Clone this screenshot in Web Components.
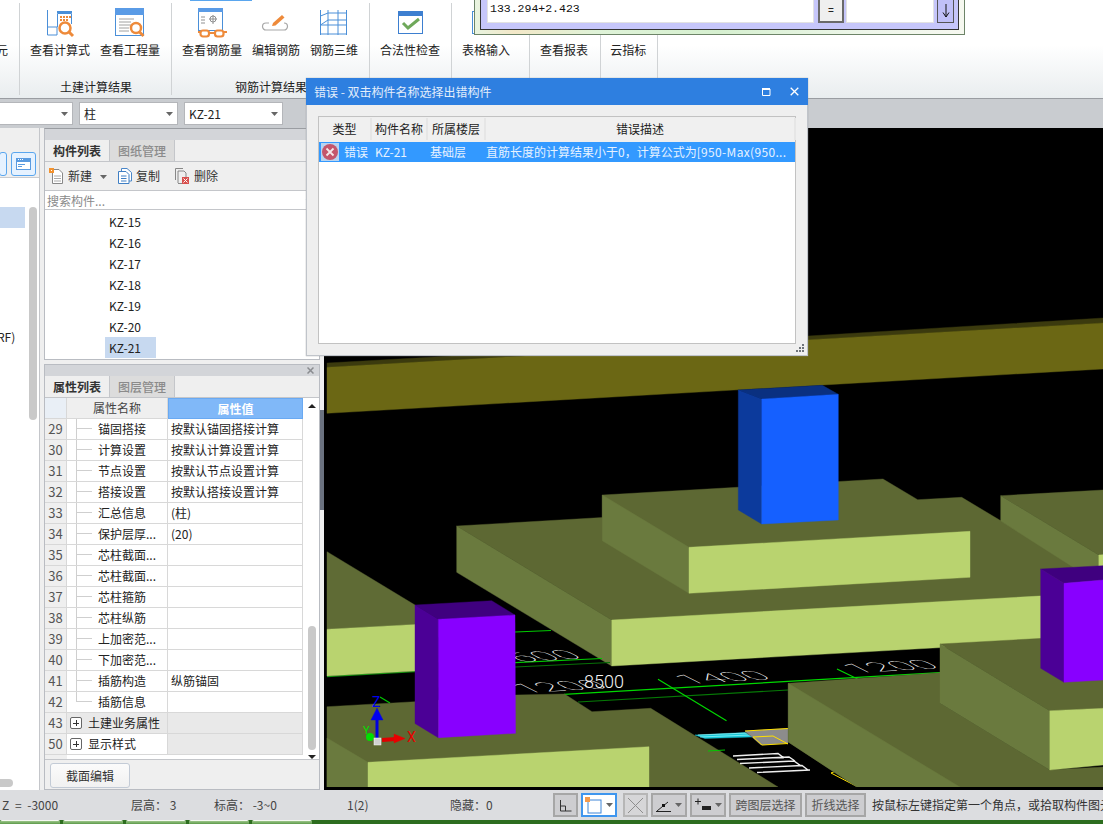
<!DOCTYPE html>
<html lang="zh"><head><meta charset="utf-8"><title>错误</title>
<style>
html,body{margin:0;padding:0;background:#efefef}
body{width:1103px;height:824px;overflow:hidden;font:12px/16px "Noto Sans CJK SC","Noto Sans",sans-serif;color:#222}
</style></head><body>
<x-app></x-app>
<script>
const FONT='"Noto Sans CJK SC","Noto Sans",sans-serif';
function def(name,css,html,init){
  customElements.define(name,class extends HTMLElement{
    constructor(){super();const s=this.attachShadow({mode:'open'});
      s.innerHTML='<style>'+css+'</style>'+(typeof html==='function'?html(this):html);}
    connectedCallback(){
      if(typeof this._h==='undefined'){this._h=1;
        if(typeof html==='function'){this.shadowRoot.innerHTML='<style>'+css+'</style>'+html(this);}
        if(init)init(this);}
    }
  });
}
const ARROW='<svg width="7" height="4" viewBox="0 0 7 4"><path d="M0 0H7L3.5 4Z" fill="#666"/></svg>';
const COMMA='<span style="font-family:\'Noto Sans CJK TC\',sans-serif">，</span>';

/* ---------- ribbon ---------- */
def('x-ribbon',`:host{display:flex;height:98px;border-bottom:1px solid #9a9da2;box-sizing:content-box;position:relative;
  background:linear-gradient(#fff 0,#fff 45px,#e9edef 98px);align-items:flex-start}
  :host::before{content:"";position:absolute;left:190px;top:0;width:62px;height:1px;background:#5aa6ee}`,'<slot></slot>');
def('x-ribbon-group',`:host{display:flex;flex-direction:column;height:92px;margin-top:3px;border-right:1px solid #d0d3d5;box-sizing:content-box;flex:none}
  .items{display:flex;gap:10px;margin-top:5px}
  .t{margin-top:auto;height:16px;text-align:center;line-height:16px;color:#222;white-space:nowrap;position:relative;left:1px}`,
  h=>`<div class="items"><slot></slot></div><div class="t">${h.getAttribute('title')||''}</div>`);
def('x-ribbon-item',`:host{display:flex;flex-direction:column;align-items:center;flex:none}
  .i{width:34px;height:30px;display:block}
  .l{margin-top:4px;white-space:nowrap;line-height:16px;color:#222}`,
  h=>`<div class="i"><slot></slot></div><div class="l">${h.getAttribute('label')}</div>`);

/* ---------- combos row ---------- */
def('x-toolbar',`:host{display:flex;height:29px;background:#c9ccd0;box-sizing:border-box;padding-top:3px;gap:6px;align-items:flex-start}`,'<slot></slot>');
def('x-combo',`:host{display:flex;align-items:center;justify-content:space-between;height:23px;box-sizing:border-box;background:#fff;border:1px solid #b4b6ba;padding:0 4px;flex:none;color:#222}`,
  h=>`<span>${h.getAttribute('text')||''}</span>${ARROW}`);

/* ---------- left tree ---------- */
def('x-tree',`:host{display:flex;flex-direction:column;width:40px;flex:none;border-right:1px solid #c4c6ca;box-sizing:border-box;background:#fff;overflow:hidden}
  .top{height:50px;background:#efefef;border-bottom:1px solid #c9cbcf;display:flex;align-items:flex-end;padding-bottom:1px;gap:4px;box-sizing:border-box}
  .b{height:24px;box-sizing:border-box;border:1px solid #5aa6ee;border-radius:3px;background:#e6f2ff;flex:none;display:flex;align-items:center;justify-content:center}
  .body{position:relative;flex:1;display:flex}
  .list{width:29px;flex:none;padding-top:29px}
  .sel{height:21px;width:25px;background:#c7d9f0}
  .rf{margin-top:99px;line-height:20px;margin-left:-3px;color:#222}
  .sc{width:8px;flex:none;margin:29px 0 0 0;height:213px;background:#c9c9c9;border-radius:4px}
  .h{position:absolute;left:0;bottom:3px;width:13px;height:8px;background:#c9c9c9;border-radius:0 4px 4px 0}`,
  `<div class="top"><div class="b" style="width:8px;margin-left:-1px;margin-bottom:0"></div>
    <div class="b" style="width:25px"><svg width="15" height="12" viewBox="0 0 15 12"><rect width="15" height="12" fill="#5a9be0"/><rect x="1" y="4" width="13" height="7" fill="#fff"/><rect x="2" y="6" width="7" height="1" fill="#5a9be0"/><rect x="2" y="8" width="4" height="1" fill="#5a9be0"/><rect x="2" y="1" width="1" height="1" fill="#fff"/><rect x="4" y="1" width="1" height="1" fill="#fff"/><rect x="6" y="1" width="1" height="1" fill="#fff"/></svg></div></div>
   <div class="body"><div class="list"><div class="sel"></div><div class="rf">RF)</div></div><div class="sc"></div><div class="h"></div></div>`);

/* ---------- panel shell ---------- */
def('x-panel',`:host{display:flex;flex-direction:column;box-sizing:border-box;border:1px solid #b9bcc2;border-top-color:#9a9da2;background:#efefef;overflow:hidden;position:relative}
  .hd{height:11px;background:#d3d5d9;flex:none;display:flex;justify-content:flex-end;align-items:center;padding-right:5px;color:#8a8c90}
  .tabs{height:21px;display:flex;flex:none;border-bottom:1px solid #c4c6ca;background:#efefef}
  .tab{width:64px;text-align:center;line-height:21px;font-weight:700;color:#333;border-right:1px solid #c4c6ca;font-size:12px}
  .tab.off{font-weight:500;color:#8b8b8b;background:#dcdcdc}`,
  h=>`<div class="hd">${h.hasAttribute('closable')?'<svg width="7" height="7" viewBox="0 0 7 7"><path d="M.5.5l6 6M6.5.5l-6 6" stroke="#8a8c90" stroke-width="1.5"/></svg>':''}</div>
   <div class="tabs"><div class="tab">${h.getAttribute('a')}</div><div class="tab off">${h.getAttribute('b')}</div></div><slot></slot>`);

def('x-tool-action',`:host{display:inline-flex;align-items:center;gap:4px;color:#333}`,
  h=>`<slot></slot><span>${h.getAttribute('label')}</span>`);

def('x-comp-list',`:host{display:flex;flex-direction:column;flex:1;min-height:0}
  .tb{height:29px;border-bottom:1px solid #c4c6ca;box-sizing:border-box;display:flex;align-items:center;padding-left:4px;flex:none}
  .s{height:19px;box-sizing:border-box;background:#fff;border-bottom:1px solid #c4c6ca;color:#8a8a8a;padding:0 4px 0 2px;line-height:17px;flex:none;white-space:nowrap;display:flex;align-items:center;justify-content:space-between}
  .l{flex:1;background:#fff;padding-top:1px}
  .r{height:21px;line-height:21px;margin-left:60px;padding-left:4px;width:47px;color:#222}
  .r.on{background:#c7d9f0}`,
  ()=>`<div class="tb">
    <x-tool-action label="新建" style="width:48px"><svg width="15" height="16" viewBox="0 0 15 16"><path d="M3.5 1.5H10l3.5 3.5v10.5h-10z" fill="#fff" stroke="#888"/><path d="M5 8h7M5 10.500h7M5 13h7" stroke="#aaa"/><rect x="0" y="0" width="5" height="5" fill="#f3932f"/><rect x="2" y="2" width="1" height="1" fill="#fff"/></svg></x-tool-action>
    <span style="margin:1px 0 0 3px;width:18px;display:inline-flex">${ARROW}</span>
    <x-tool-action label="复制"><svg width="14" height="16" viewBox="0 0 14 16"><path d="M3.500 3V.5H9l4.500 4V13H11" fill="#fff" stroke="#4a86c8"/><path d="M.5 3.500H8l3 3v9H.5z" fill="#fff" stroke="#3f7fc4"/><path d="M3 8h5.500M3 10.500h5.500M3 13h5.500" stroke="#3f7fc4"/></svg></x-tool-action>
    <x-tool-action label="删除" style="margin-left:15px;gap:5px"><svg width="14" height="16" viewBox="0 0 14 16"><path d="M.5 12V.5H8M3 15V3h6l2 2v4" fill="none" stroke="#888"/><path d="M3 15.500h5" stroke="#888"/><rect x="7" y="9" width="7" height="7" fill="#d8504e"/><path d="M8.500 10.500l4 4M12.500 10.500l-4 4" stroke="#fff"/></svg></x-tool-action>
   </div>
   <div class="s"><span>搜索构件...</span><svg width="10" height="10" viewBox="0 0 10 10"><circle cx="5" cy="4.500" r="3.500" fill="none" stroke="#3f8fd8" stroke-width="1.200"/><path d="M7.500 7l2 2" stroke="#3f8fd8"/></svg></div>
   <div class="l">${['KZ-15','KZ-16','KZ-17','KZ-18','KZ-19','KZ-20','KZ-21'].map((k,i)=>`<div class="r${i==6?' on':''}">${k}</div>`).join('')}</div>`);

const PROPS=[[29,'锚固搭接','按默认锚固搭接计算'],[30,'计算设置','按默认计算设置计算'],[31,'节点设置','按默认节点设置计算'],[32,'搭接设置','按默认搭接设置计算'],[33,'汇总信息','(柱)'],[34,'保护层厚...','(20)'],[35,'芯柱截面...',''],[36,'芯柱截面...',''],[37,'芯柱箍筋',''],[38,'芯柱纵筋',''],[39,'上加密范...',''],[40,'下加密范...',''],[41,'插筋构造','纵筋锚固'],[42,'插筋信息','']];
def('x-prop-table',`:host{display:flex;flex-direction:column;flex:1;min-height:0;position:relative}
  .wrap{display:flex;flex:none;background:#fff;height:362px;border-bottom:1px solid #c4c6ca;box-sizing:border-box}
  .grid{width:258px;flex:none;display:grid;grid-template-columns:22px 101px 135px;grid-auto-rows:21px}
  .c{box-sizing:border-box;border-right:1px solid #d8d8d8;border-bottom:1px solid #d8d8d8;line-height:20px;white-space:nowrap;overflow:hidden;color:#222}
  .hd{background:#efefef;text-align:center;color:#444}
  .hv{background:#80b8f8;border:1px solid #69a9f2;text-align:center;color:#fff;font-weight:700}
  .hi{background:#e9eff6}
  .i{background:#efefef;text-align:center;color:#555;font-size:13px}
  .n{padding-left:31px;position:relative}
  .n::before{content:"";position:absolute;left:9px;top:0;bottom:0;width:1px;background:#cfcfcf}
  .n::after{content:"";position:absolute;left:9px;top:9px;width:16px;height:1px;background:#cfcfcf}
  .n.last::before{bottom:10px}
  .v{padding-left:3px}
  .g{background:#e9e9e9}
  .p{display:flex;align-items:center;padding-left:3px;gap:6px}
  .box{width:12px;height:12px;box-sizing:border-box;border:1px solid #666;border-radius:2px;position:relative;flex:none;background:#fff}
  .box::before{content:"";position:absolute;left:2px;right:2px;top:4px;height:1px;background:#333;top:4.500px}
  .box::after{content:"";position:absolute;top:2px;bottom:2px;left:4.500px;width:1px;background:#333}
  .sb{flex:1;position:relative;background:#fff}
  .u{position:absolute;left:5px;top:6px;border:4px solid transparent;border-top:0;border-bottom:4px solid #222}
  .d{position:absolute;left:5px;bottom:0;border:4px solid transparent;border-bottom:0;border-top:4px solid #222}
  .th{position:absolute;left:5px;top:228px;width:8px;height:124px;background:#c9c9c9;border-radius:4px}
  .foot{flex:1;padding:3px 0 0 5px}
  .btn{width:80px;height:25px;box-sizing:border-box;border:1px solid #c3cbd6;border-radius:3px;background:linear-gradient(#fbfbfb,#f1f1f1);text-align:center;line-height:23px;color:#333}`,
  ()=>{let r=`<div class="c hi"></div><div class="c hd">属性名称</div><div class="c hv">属性值</div>`;
    PROPS.forEach((p,i)=>{r+=`<div class="c i">${p[0]}</div><div class="c n${i==13?' last':''}">${p[1]}</div><div class="c v">${p[2]}</div>`;});
    r+=`<div class="c i">43</div><div class="c p g"><span class="box"></span><span>土建业务属性</span></div><div class="c g"></div>`;
    r+=`<div class="c i">50</div><div class="c p"><span class="box"></span><span>显示样式</span></div><div class="c g"></div>`;
    return `<div class="wrap"><div class="grid">${r}<div class="i" style="height:4px"></div></div><div class="sb"><div class="u"></div><div class="th"></div><div class="d"></div></div></div>
      <div class="foot"><div class="btn">截面编辑</div></div>`;});

/* ---------- 3D scene ---------- */
const TOP='#5d6833',SIDE='#6a7a3e',LIME='#b9d36f';
function pg(p,c){return `<polygon points="${p}" fill="${c}" stroke="${c}" stroke-width=".4"/>`;}
const NUM='fill="#f2f2f2" font-size="14" font-weight="100"';
def('x-scene',`:host{display:block;flex:1;min-width:0;background:#000;position:relative;overflow:hidden}
  svg{display:block}
  text{font-family:Roboto,"Liberation Sans",sans-serif}`,
 `<svg width="779" height="662" viewBox="324 128 779 662">
  <rect x="324" y="128" width="779" height="662" fill="#000"/>
  ${pg('327,363 327,367.300 1103,323 1103,318 808,336','#3b3a0e')}
  ${pg('327,367.300 1103,323 1103,369 327,413.300','#6b6714')}
  ${pg('738.300,390 822.300,385.300 838.300,394.300 761.700,399','#0a3080')}
  ${pg('456.700,526 602.300,517.500 602.300,495 883,479 917.700,499.700 961.700,497.300 1103,582 1103,640 611.700,620',TOP)}
  ${pg('602.300,495 689,547.300 689,593.300 602.300,540.700',SIDE)}
  ${pg('689,547.300 970,531.300 970,577.300 689,593.300',LIME)}
  ${pg('1000.700,495.700 1103,490 1103,555 1098.700,555',TOP)}
  ${pg('1000.700,495.700 1098.700,555 1098.700,578 1073.300,567.300 1000.700,521',SIDE)}
  ${pg('1098.700,555 1103,554.700 1103,576 1098.700,576',LIME)}
  ${pg('456.700,526 611.700,620 611.700,666 456.700,572.300',SIDE)}
  ${pg('611.700,620 1103,592.500 1103,638.500 611.700,666',LIME)}
  ${pg('738.300,390 761.700,399 761.700,524 738.300,510','#0c3a9c')}
  ${pg('761.700,399 838.300,394.300 838.300,520 761.700,524','#1560ff')}

  <g stroke-width="1.200" fill="none">
   <path d="M327 676.700L415 671.700" stroke="#0a8a0a"/>
   <path d="M515 632L551 630.500M515 662.700L602 658.500" stroke="#00c800"/>
   <path d="M515 667L610 662.500" stroke="#077007"/>
   <path d="M564 694.300L940 672.700" stroke="#00d800"/>
   <path d="M578 702L788 690" stroke="#067a06"/>
   <path d="M658 679.300L726.500 720.700M837 669L857.600 679" stroke="#00d800"/>
   <path d="M380 697L390 703" stroke="#00c800"/>
  </g>
  <g ${NUM}>
   <text transform="matrix(2.800,-.16,1.700,.85,520,662)">600</text>
   <text transform="matrix(2.800,-.16,1.700,.85,525,693)">1200</text>
   <text transform="matrix(2.800,-.16,1.700,.85,688,684)">1400</text>
   <text transform="matrix(2.800,-.16,1.700,.85,856,673)">1200</text>
  </g>
  <text x="584" y="688" font-size="18" fill="#f4f4f4" font-weight="300">8500</text>

  ${pg('327,551.700 415,605 415,624.500 327,629.300','#5f6b35')}
  ${pg('327,629.300 415,624.500 415,671 327,676',LIME)}
  ${pg('327,706.700 415,701.700 515.500,695 564.500,694 592,711.700 650.700,708.300 778,787 327,787',TOP)}
  ${pg('327,738 368,762.300 368,787 327,787',SIDE)}
  ${pg('368,762.300 649,746.700 649,787 368,787',LIME)}
  ${pg('415,605 491.700,600.700 515,615 438.300,619.300','#3f007f')}
  ${pg('415,605 438.300,619.300 438.300,737.700 415,723.500','#4b0096')}
  ${pg('438.300,619.300 515,615 515.500,733.300 438.600,737.700','#8800ff')}

  ${pg('695,735 745,732.500 752,737 705,738.500','#18c8d8')}
  <path d="M698 735L748 733M700 737L750 735" stroke="#bff" stroke-width=".6"/>
  ${pg('745,731 788,728.500 788,743 761,745','#8c8c8c')}
  <path d="M745 731L788 728.500M753 737L773 736L788 744M753 737L762 745L788 743.500" stroke="#ffe000" fill="none"/>
  <path d="M733 756L778 753.500L784 758M737 759.500L789 757L795 761M740 763.500L794 761L801 766M749 768L802 765.500L808 770M757 772.500L810 770" stroke="#eee" stroke-width="1.400" fill="none"/>
  <path d="M708 751L725 750" stroke="#00c800"/>
  <path d="M831 773L856 786M831 773L836 771" stroke="#ffe000" fill="none"/>

  ${pg('940,644 1103,635 1103,708.300 1049.700,710.700',TOP)}
  ${pg('788.300,683.300 940,672.700 940,703.300 1049.700,770 1103,767 1103,790 857,787 788.300,742',TOP)}
  ${pg('940,644 1049.700,710.700 1049.700,770 940,703.300',SIDE)}
  ${pg('1049.700,710.700 1103,708.300 1103,765 1049.700,770',LIME)}
  ${pg('788.300,683.300 960,787 857,787 788.300,742',SIDE)}
  ${pg('1040.700,569 1103,565.700 1103,580 1064,583.300','#3f007f')}
  ${pg('1040.700,569 1064,583.300 1064,682.300 1040.700,668.300','#4b0096')}
  ${pg('1064,583.300 1103,580 1103,680 1064,682.300','#8800ff')}

  <path d="M377 740V718" stroke="#0000e0" stroke-width="3"/>
  ${pg('377,708 383,720 371,720','#0000f0')}
  <text x="372" y="707" font-size="14" fill="#0000f0" font-family="Liberation Sans">Z</text>
  <path d="M382 740L396 739" stroke="#e00000" stroke-width="4"/>
  ${pg('394,734 405,738.500 394,743','#e80000')}
  <text x="407" y="742" font-size="14" fill="#e80000" font-family="Liberation Sans">X</text>
  <circle cx="370" cy="737" r="4" fill="#00e000"/>
  <text x="363" y="734" font-size="11" fill="#00e000" font-family="Liberation Sans">Y</text>
  <rect x="374" y="738" width="7" height="7" fill="#d0d0d0" stroke="#fff" stroke-width=".5"/>
  <rect x="324" y="787" width="779" height="3" fill="#000"/>
 </svg>`);

/* ---------- status bar ---------- */
def('x-status',`:host{display:flex;align-items:center;height:30px;background:#dcdde0;color:#444;white-space:nowrap;overflow:hidden;box-sizing:border-box}
  .t{flex:none}
  .btns{display:flex;gap:3px;align-items:center;margin-left:0}
  .tail{margin-left:6px;color:#333;flex:none}`,
  `<span class="t" style="width:129px;margin-left:2px;word-spacing:3px">Z = -3000</span>
   <span class="t" style="width:83px">层高： 3</span>
   <span class="t" style="width:133px">标高： -3~0</span>
   <span class="t" style="width:103px">1(2)</span>
   <span class="t" style="width:103px">隐藏：0</span>
   <div class="btns">
    <x-sbtn w="25"><svg width="15" height="15" viewBox="0 0 15 15"><path d="M2.500 2v11h11M2.500 8H7.500V13" stroke="#333" fill="none"/></svg></x-sbtn>
    <x-sbtn w="36" on arrow style="margin-right:3px"><svg width="17" height="17" viewBox="0 0 17 17"><rect x="3" y="3" width="13" height="13" fill="#fff" stroke="#3f86d8"/><rect x="0" y="0" width="5" height="5" fill="#f59a4a"/></svg></x-sbtn>
    <x-sbtn w="25" off><svg width="17" height="17" viewBox="0 0 17 17"><path d="M1 1l15 15M16 1L1 16" stroke="#8e8e8e"/></svg></x-sbtn>
    <x-sbtn w="36" arrow><svg width="15" height="14" viewBox="0 0 15 14"><path d="M0 13.500h15M1 13L12 4" stroke="#222" fill="none"/><rect x="6" y="6" width="3" height="3" fill="#111"/></svg></x-sbtn>
    <x-sbtn w="36" arrow><svg width="16" height="14" viewBox="0 0 16 14"><path d="M0 3.500h6M3 .5v6" stroke="#222"/><rect x="7" y="8" width="9" height="4" fill="#222"/></svg></x-sbtn>
    <x-sbtn w="73" label="跨图层选择"></x-sbtn>
    <x-sbtn w="61" label="折线选择"></x-sbtn>
   </div>
   <span class="tail">按鼠标左键指定第一个角点${COMMA}或拾取构件图元</span>`);
def('x-sbtn',`:host{display:flex;align-items:center;justify-content:center;gap:4px;height:24px;box-sizing:border-box;border:2px solid #a6a6a6;background:#cdcdd0;color:#555;flex:none}
  :host([on]){background:#fff;border:2px solid #3f96ee}
  :host([off]){background:#d6d6d8;border-color:#b6b6b6}`,
  h=>`<slot></slot>${h.getAttribute('label')?`<span>${h.getAttribute('label')}</span>`:''}${h.hasAttribute('arrow')?ARROW:''}`,
  h=>{h.style.width=h.getAttribute('w')+'px';});

def('x-taskbar',`:host{display:flex;height:4px;background:#2d6d1f;gap:3px;padding-left:0;box-sizing:border-box;overflow:hidden}
  i{display:block;width:60px;height:4px;flex:none;background:linear-gradient(#f4f8f0 1px,#9cc58a 1px,#5c9a48);border-radius:2px 2px 0 0}`,
  '<i></i><i></i><i></i><i></i><i></i>');

/* ---------- error dialog (floats over the app) ---------- */
def('x-dialog',`:host{position:absolute;left:306px;top:78px;width:502px;height:278px;background:#efefef;border:1px solid #c0c4ca;border-top:0;box-sizing:border-box;display:flex;flex-direction:column;box-shadow:0 0 1px #999}
  .title{height:27px;background:#2e7fe0;color:#e2edfb;display:flex;align-items:center;padding:0 9px 0 8px;margin:0 -1px;flex:none}
  .title span{flex:1;white-space:nowrap}
  .tbl{margin:11px 11px 0 11px;width:478px;height:228px;box-sizing:border-box;border:1px solid #c2c2c2;background:#fff}
  .h{display:grid;grid-template-columns:51px 54px 56px 1fr;height:25px;background:#efefef;box-sizing:border-box;gap:2px;padding:1px 1px 2px 0}
  .h div{background:#f0f0f0;text-align:center;line-height:22px;color:#222;border-right:2px solid #e6e6e6;margin-right:-2px}
  .r{display:grid;grid-template-columns:25px 31px 55px 56px 1fr;height:20px;background:#3399ff;color:#e6f2ff;line-height:20px;white-space:nowrap;align-items:center}
  .r svg{margin-left:2px;display:block}
  .lat{letter-spacing:.33px}
  .grip{align-self:flex-end;margin:auto 2px 2px 0}`,
  `<div class="title"><span>错误 - 双击构件名称选择出错构件</span>
     <svg width="9" height="8" viewBox="0 0 9 8" style="margin-right:19px"><path d="M.5 1h7.500v6.500H.5z" fill="none" stroke="#fff"/><path d="M0 1h8" stroke="#fff" stroke-width="2"/></svg>
     <svg width="9" height="9" viewBox="0 0 9 9"><path d="M.7.700l7.600 7.600M8.300.700L.7 8.300" stroke="#fff" stroke-width="1.300"/></svg></div>
   <div class="tbl"><div class="h"><div>类型</div><div>构件名称</div><div>所属楼层</div><div>错误描述</div></div>
     <div class="r"><svg width="18" height="18" viewBox="0 0 18 18"><rect width="18" height="18" fill="#b9d4f0"/><circle cx="9" cy="9" r="8" fill="#c4566c"/><path d="M5.500 5.500l7 7M12.500 5.500l-7 7" stroke="#f4e8ea" stroke-width="1.800"/></svg><span>错误</span><span>KZ-21</span><span>基础层</span><span>直筋长度的计算结果小于0${COMMA}计算公式为<span class="lat">[950-Max(950...</span></span></div></div>
   <svg class="grip" width="9" height="9" viewBox="0 0 9 9" fill="#6f747a"><rect x="6" y="0" width="2" height="2"/><rect x="3" y="3" width="2" height="2"/><rect x="6" y="3" width="2" height="2"/><rect x="0" y="6" width="2" height="2"/><rect x="3" y="6" width="2" height="2"/><rect x="6" y="6" width="2" height="2"/></svg>`);

/* ---------- calculator window ---------- */
def('x-calc',`:host{position:absolute;left:474px;top:0;width:491px;height:35px;box-sizing:border-box;border:1px solid #6d8468;border-top:0;background:linear-gradient(90deg,#e8f4e0,#f3e8c8 8%,#dff3d8 25%,#d6f0d0 50%,#eef6ea 80%,#f6f8f0);display:block;padding:0 5px 4px 5px}
  .in{height:30px;box-sizing:border-box;border:1px solid #333;border-top:0;background:#c6c6fa;display:flex;padding:0 5px 6px 6px;align-items:stretch}
  .f{background:#fff;border:1px solid #e2e2e2;border-top:0;box-sizing:border-box;flex:none}
  .t{font:11.500px/17px "Liberation Mono",monospace;color:#111;padding-left:2px}
  .eq{width:26px;margin:0 2px 0 4px;box-sizing:border-box;border:2px solid #6a6a6a;border-top:0;background:#efefef;text-align:center;font:10px/26px "Liberation Sans",sans-serif;color:#222;flex:none;line-height:22px}
  .ar{width:17px;margin-left:3px;box-sizing:border-box;border:1px solid #555;border-top:0;background:#c0c0f8;flex:none;display:flex;justify-content:center;align-items:center}`,
  `<div class="in"><div class="f t" style="width:327px">133.294+2.423</div><div class="eq">=</div><div class="f" style="width:88px"></div><div class="ar"><svg width="8" height="14" viewBox="0 0 8 14"><path d="M4 0V13M1 8.500L4 13L7 8.500" stroke="#111" fill="none"/></svg></div></div>`);

/* ---------- app ---------- */
const B='#4a8fd8',O='#ee8a3a';
def('x-app',`:host{display:flex;flex-direction:column;width:1103px;height:824px;position:relative;overflow:hidden;font:12px/16px ${FONT}}
  .main{display:flex;height:662px;flex:none;background:#efefef}
  .col{width:276px;margin-left:4px;display:flex;flex-direction:column;gap:4px;flex:none;box-sizing:border-box}
  .split{width:4px;flex:none;position:relative;background:#efefef}
  .split i{position:absolute;left:0;top:282px;width:4px;height:100px;background:#6b7280}`,
 `<x-ribbon>
   <x-ribbon-group style="width:19px;overflow:hidden"><x-ribbon-item label="元" style="margin-left:-15px"></x-ribbon-item></x-ribbon-group>
   <x-ribbon-group title="土建计算结果" style="padding:0 11px 0 10px">
     <x-ribbon-item label="查看计算式"><svg width="34" height="30" viewBox="0 0 34 30"><path d="M4.500 2V27H14V19H4.500" fill="none" stroke="${B}"/><path d="M14.500 19V5.500H28.500V16" fill="#fff" stroke="${B}"/><path d="M14 4h15" stroke="${B}" stroke-width="2"/><g fill="${O}"><rect x="17" y="8" width="2" height="2"/><rect x="20" y="8" width="2" height="2"/><rect x="23" y="8" width="2" height="2"/><rect x="26" y="8" width="2" height="2"/><rect x="17" y="11" width="2" height="2"/><rect x="20" y="11" width="2" height="2"/><rect x="23" y="11" width="2" height="2"/></g><circle cx="22" cy="20" r="5.500" fill="#fff" stroke="${O}" stroke-width="2.500"/><path d="M26 24l4 4" stroke="${O}" stroke-width="3"/></svg></x-ribbon-item>
     <x-ribbon-item label="查看工程量"><svg width="34" height="30" viewBox="0 0 34 30"><rect x="2.500" y=".5" width="28" height="27" fill="#fff" stroke="${B}"/><rect x="2" y="0" width="29" height="7" fill="#5a9be6"/><path d="M6 11h15M6 14h12M6 17h12M6 20h10M6 23h10" stroke="#a0a0a0"/><circle cx="23" cy="20" r="5" fill="#fff" stroke="${O}" stroke-width="2.500"/><path d="M26.500 24l4 4" stroke="${O}" stroke-width="3"/></svg></x-ribbon-item>
   </x-ribbon-group>
   <x-ribbon-group title="钢筋计算结果" style="padding:0 11px 0 10px">
     <x-ribbon-item label="查看钢筋量"><svg width="34" height="30" viewBox="0 0 34 30"><rect x="3.500" y=".5" width="24" height="22" fill="#fff" stroke="${B}"/><rect x="3" y="0" width="25" height="4" fill="#5a9be6"/><path d="M6 9h4M6 12h4M6 15h4M14 11h8M18 7v9" stroke="#909090" fill="none"/><circle cx="18" cy="11" r="3" fill="none" stroke="#909090"/><path d="M3 24h3M13 24l2 1h4l2-1M29 24h3" fill="none" stroke="${O}" stroke-width="1.800"/><rect x="5.500" y="22.500" width="8.500" height="6" rx="2.500" fill="#fff" stroke="${O}" stroke-width="2.200"/><rect x="20" y="22.500" width="8.500" height="6" rx="2.500" fill="#fff" stroke="${O}" stroke-width="2.200"/></svg></x-ribbon-item>
     <x-ribbon-item label="编辑钢筋"><svg width="34" height="30" viewBox="0 0 34 30"><path d="M10 15H7a3.500 3.500 0 0 0 0 7H25a3.500 3.500 0 0 0 0-7" fill="none" stroke="#a8a8a8" stroke-width="1.200"/><path d="M13 18l1-3 9-8 2.500 2.500-9 8z" fill="${O}"/></svg></x-ribbon-item>
     <x-ribbon-item label="钢筋三维"><svg width="34" height="30" viewBox="0 0 34 30"><path d="M3.500 2V27M11 2V27M21 2V27M29.500 2V27M3.500 8L11 5H29.500M3.500 17H29.500M11 12H29.500M3.500 26H29.500M3.500 17L11 12" fill="none" stroke="${B}"/></svg></x-ribbon-item>
   </x-ribbon-group>
   <x-ribbon-group style="padding:0 11px 0 10px">
     <x-ribbon-item label="合法性检查"><svg width="34" height="30" viewBox="0 0 34 30"><rect x="5.500" y="3.500" width="24" height="22" fill="#fff" stroke="#3d7fd0"/><rect x="5" y="3" width="25" height="5" fill="#3d7fd0"/><path d="M10 15l5 5 11-9" fill="none" stroke="#6fa85a" stroke-width="3"/></svg></x-ribbon-item>
   </x-ribbon-group>
   <x-ribbon-group style="padding:0 19px 0 10px">
     <x-ribbon-item label="表格输入"><svg width="34" height="30" viewBox="0 0 34 30"><rect x="3.500" y="3.500" width="27" height="22" fill="#fff" stroke="${B}"/></svg></x-ribbon-item>
   </x-ribbon-group>
   <x-ribbon-group style="padding:0 12px 0 10px"><x-ribbon-item label="查看报表"></x-ribbon-item></x-ribbon-group>
   <x-ribbon-group style="padding:0 11px 0 9px"><x-ribbon-item label="云指标"></x-ribbon-item></x-ribbon-group>
  </x-ribbon>
  <x-toolbar>
    <x-combo style="width:73px;border-left:0"></x-combo>
    <x-combo text="柱" style="width:99px"></x-combo>
    <x-combo text="KZ-21" style="width:99px"></x-combo>
  </x-toolbar>
  <div class="main">
    <x-tree></x-tree>
    <div class="col">
      <x-panel a="构件列表" b="图纸管理" style="height:232px;flex:none"><x-comp-list></x-comp-list></x-panel>
      <x-panel a="属性列表" b="图层管理" closable style="flex:1;min-height:0;border-top-color:#b9bcc2"><x-prop-table></x-prop-table></x-panel>
    </div>
    <div class="split"><i></i></div>
    <x-scene></x-scene>
  </div>
  <x-status></x-status>
  <x-taskbar></x-taskbar>
  <x-calc></x-calc>
  <x-dialog></x-dialog>`);
</script>
</body></html>
